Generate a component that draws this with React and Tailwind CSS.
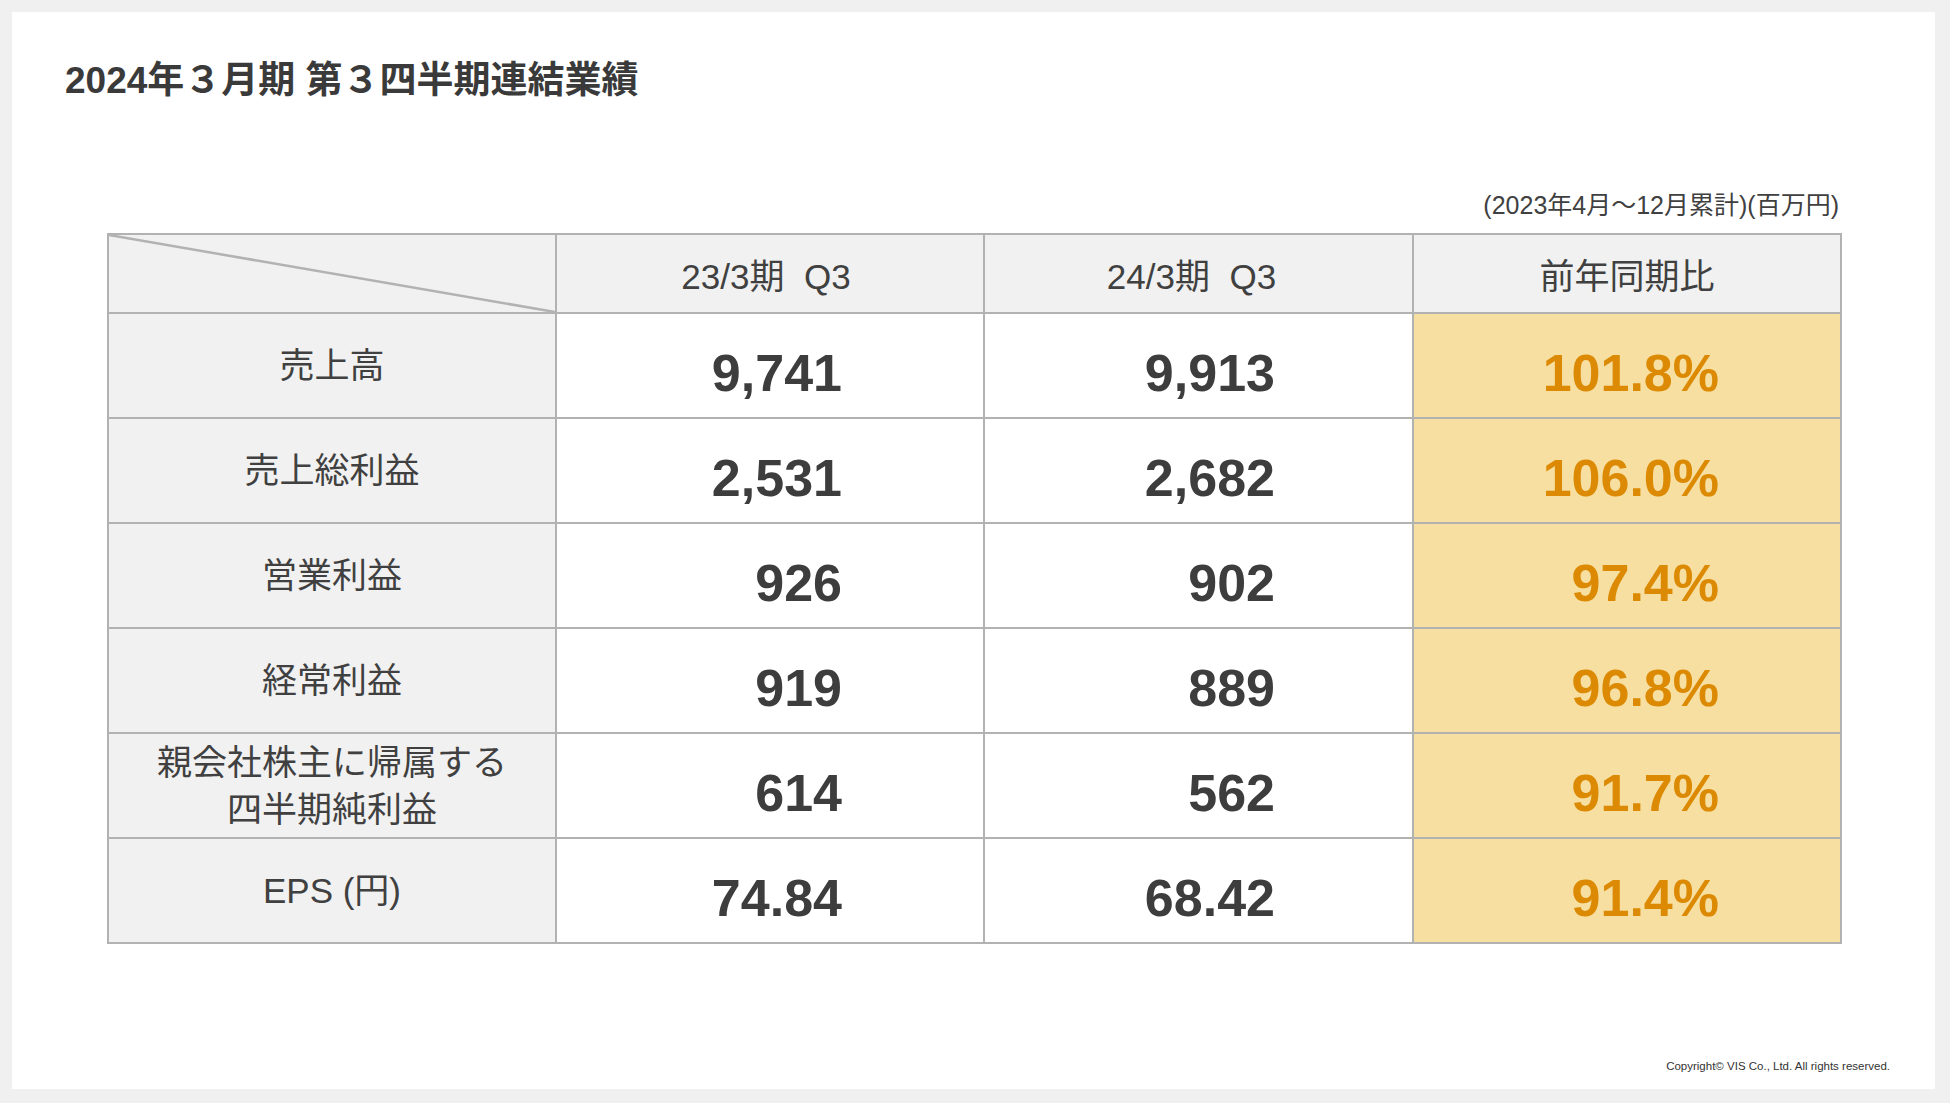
const FONT = '"Liberation Sans", "Noto Sans CJK JP", sans-serif';

const rows = [
  { label: '売上高', prev: '9,741', cur: '9,913', ratio: '101.8%' },
  { label: '売上総利益', prev: '2,531', cur: '2,682', ratio: '106.0%' },
  { label: '営業利益', prev: '926', cur: '902', ratio: '97.4%' },
  { label: '経常利益', prev: '919', cur: '889', ratio: '96.8%' },
  {
    label: (
      <>
        親会社株主に帰属する
        <br />
        四半期純利益
      </>
    ),
    prev: '614',
    cur: '562',
    ratio: '91.7%',
  },
  { label: 'EPS (円)', prev: '74.84', cur: '68.42', ratio: '91.4%' },
];

function HeadCell({ children, shift = '' }) {
  return (
    <div className={`flex items-center justify-center pt-[6px] border-r-2 border-b-2 border-[#b2b2b2] bg-[#f1f1f1] text-[35px] text-[#404040] leading-none ${shift}`}>
      {children}
    </div>
  );
}

function App() {
  return (
    <div
      className="w-[1950px] h-[1103px] bg-[#f0f0f0] pt-[12px] pl-[12px] pr-[15px] pb-[14px]"
      style={{ fontFamily: FONT }}
    >
      <div className="flex flex-col h-full bg-white">
        <h1 className="mt-[45px] pl-[53px] text-[37px] leading-[48px] font-bold text-[#3a3a3a]">
          2024年３月期 第３四半期連結業績
        </h1>

        <div className="mt-[84px] pr-[96px] text-right text-[25px] leading-[32px] text-[#404040]">
          (2023年4月〜12月累計)(百万円)
        </div>

        <div className="mt-[12px] ml-[95px] w-[1735px] grid grid-cols-[448px_428px_429px_428px] grid-rows-[79px_repeat(6,105px)] border-l-2 border-t-2 border-[#b2b2b2]">
          <div className="relative border-r-2 border-b-2 border-[#b2b2b2] bg-[#f1f1f1]">
            <svg className="absolute inset-0 w-full h-full" viewBox="0 0 100 100" preserveAspectRatio="none">
              <line x1="0" y1="0" x2="100" y2="100" stroke="#b2b2b2" strokeWidth="2.5" vectorEffect="non-scaling-stroke" />
            </svg>
          </div>
          <HeadCell shift="pr-[8px]">23/3期&nbsp;&nbsp;Q3</HeadCell>
          <HeadCell shift="pr-[14px]">24/3期&nbsp;&nbsp;Q3</HeadCell>
          <HeadCell>前年同期比</HeadCell>

          {rows.map((r, i) => (
            <div key={i} className="contents">
              <div className="flex items-center justify-center text-center border-r-2 border-b-2 border-[#b2b2b2] bg-[#f1f1f1] text-[35px] leading-[47px] text-[#404040]">
                <span>{r.label}</span>
              </div>
              <div className="flex items-center justify-end pr-[141px] pt-[14px] border-r-2 border-b-2 border-[#b2b2b2] bg-white text-[52px] font-bold leading-none text-[#3d3d3d]">
                {r.prev}
              </div>
              <div className="flex items-center justify-end pr-[137px] pt-[14px] border-r-2 border-b-2 border-[#b2b2b2] bg-white text-[52px] font-bold leading-none text-[#3d3d3d]">
                {r.cur}
              </div>
              <div className="flex items-center justify-end pr-[121px] pt-[14px] border-r-2 border-b-2 border-[#b2b2b2] bg-[#f6dfa0] text-[52px] font-bold leading-none text-[#dc8a04]">
                {r.ratio}
              </div>
            </div>
          ))}
        </div>

        <div className="mt-auto pb-[16px] pr-[45px] text-right text-[11.5px] leading-[14px] text-[#333333]">
          Copyright© VIS Co., Ltd. All rights reserved.
        </div>
      </div>
    </div>
  );
}

export default App;
